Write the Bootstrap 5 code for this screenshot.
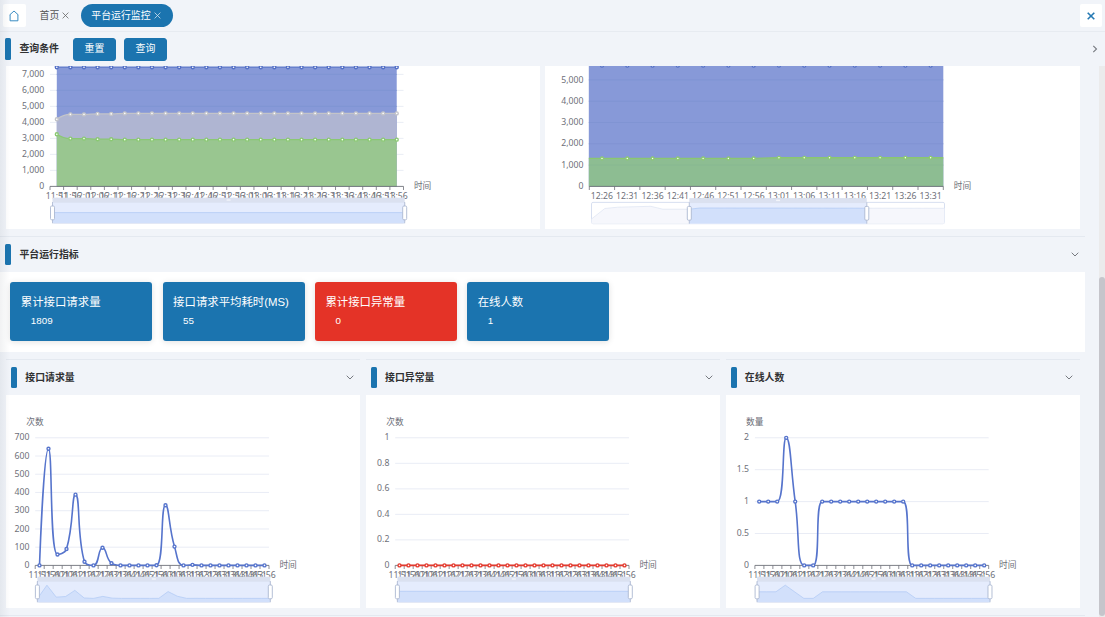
<!DOCTYPE html>
<html lang="zh-CN">
<head>
<meta charset="utf-8">
<meta name="viewport" content="width=device-width, initial-scale=1">
<title>平台运行监控</title>
<link href="https://cdn.jsdelivr.net/npm/bootstrap@5.3.0/dist/css/bootstrap.min.css" rel="stylesheet">
<style>
  body { font: 9.9px/1.4 "Liberation Sans", "Noto Sans CJK SC", sans-serif; background: #f1f4f9; color: #303133; width: 1105px; height: 617px; }
  .tab-strip { height: 32px; border-bottom: 1px solid #e7ebf1; padding: 0 3px; }
  .icon-box { width: 22.5px; height: 22.5px; background: #fff; border-radius: 2px; }
  .tab-item { color: #555; height: 22.5px; }
  .tab-item.current { background: #1b74af; color: #fff; border-radius: 12px; width: 92px; }
  .query-bar { height: 34px; padding: 0 7.5px 0 5.3px; }
  .accent { width: 6px; height: 21.5px; background: #1b74af; border-radius: 1.5px; }
  .heading { font-weight: 700; margin-left: 8.1px; }
  .btn-query { --bs-btn-font-size: 9.9px; --bs-btn-color: #fff; --bs-btn-bg: #1b74af; --bs-btn-border-color: #1b74af; --bs-btn-hover-bg: #2b84bf; --bs-btn-hover-color: #fff; --bs-btn-border-radius: 3px; width: 43px; height: 23px; padding: 0; }
  .viewport-area { height: 551px; }
  .content { width: 1085px; }
  .chart-row { padding-left: 6px; }
  .sec-head { height: 36px; border-top: 1px solid #e4e9f0; }
  .sec-main { padding: 0 6.2px 0 5.3px; }
  .sec-sub { padding: 0 6.4px 0 5.2px; }
  .metrics { height: 80px; padding: 10.3px; gap: 10.3px; margin-bottom: 7px; }
  .metric { width: 142px; height: 59px; background: #1b74af; color: #fff; border-radius: 3px; padding: 12px 10.5px; box-shadow: 0 1px 6px rgba(0,0,0,.12); }
  .metric.alarm { background: #e43327; }
  .metric-name { font-size: 11.4px; line-height: 17px; white-space: nowrap; }
  .metric-value { font-size: 9.8px; line-height: 14px; padding-left: 10px; margin-top: 3px; }
  .rail { width: 6px; background: #ebebec; }
  .rail-thumb { width: 6px; height: 339px; margin-top: 211px; border-radius: 3px; background: #c5c5cb; }
  .edge-shade { position: absolute; left: 0; top: 0; width: 10px; height: 617px; background: linear-gradient(90deg, rgba(0,21,41,.055), rgba(0,21,41,0)); pointer-events: none; }
  svg { display: block; }
  svg text { font-family: "Noto Sans", "Noto Sans CJK SC", sans-serif; font-size: 8.7px; fill: #6e7079; }
  .chev { width: 8px; height: 5px; fill: none; stroke: #777a80; stroke-width: 1; }
</style>
</head>
<body class="overflow-hidden position-relative">

<header class="tab-strip d-flex align-items-center">
  <div class="icon-box d-flex align-items-center justify-content-center">
    <svg width="10" height="12" viewBox="0 0 10 12" fill="none" stroke="#2f86bf" stroke-width=".95" stroke-linejoin="round"><path d="M.8 4.8 5 1l4.2 3.8M1.1 4.6v6.2h7.8V4.6"/></svg>
  </div>
  <div class="tab-item d-flex align-items-center ms-3 ps-0" id="tabHome"><span style="margin-left:-2px">首页</span>
    <svg style="margin-left:3px" width="7" height="7" viewBox="0 0 7 7" stroke="#666" stroke-width=".8"><path d="m.6.6 5.8 5.8M6.4.6.6 6.4"/></svg>
  </div>
  <div class="tab-item current d-flex align-items-center justify-content-center" style="margin-left:11.4px;padding-right:1.5px">平台运行监控
    <svg style="margin-left:3px" width="7" height="7" viewBox="0 0 7 7" stroke="#cfe2f0" stroke-width=".8"><path d="m.6.6 5.8 5.8M6.4.6.6 6.4"/></svg>
  </div>
  <div class="icon-box d-flex align-items-center justify-content-center ms-auto">
    <svg width="8" height="8" viewBox="0 0 8 8" stroke="#2579b3" stroke-width="1.6"><path d="m.7.7 6.6 6.6M7.3.7.7 7.3"/></svg>
  </div>
</header>

<section class="query-bar d-flex align-items-center">
  <span class="accent"></span><span class="heading">查询条件</span>
  <button class="btn btn-query" style="margin-left:14px">重置</button>
  <button class="btn btn-query" style="margin-left:8px">查询</button>
  <svg class="ms-auto" width="6" height="8" viewBox="0 0 6 8" fill="none" stroke="#777a80" stroke-width="1.1"><path d="m1.3.8 3.2 3.2-3.2 3.2"/></svg>
</section>

<main class="viewport-area d-flex justify-content-between overflow-hidden">
  <div class="content flex-shrink-0">
    <div class="chart-row d-flex" style="padding-bottom:7px;gap:5px">
      <div class="bg-white"><svg id="memory" width="534" height="163" viewBox="6 66 534 163"></svg></div>
      <div class="bg-white"><svg id="heap" width="534.5" height="163" viewBox="545.2 66 534.5 163"></svg></div>
    </div>

    <div class="sec-head sec-main d-flex align-items-center">
      <span class="accent"></span><span class="heading">平台运行指标</span>
      <svg class="chev ms-auto" viewBox="0 0 8 5"><path d="M.7.7 4 4 7.3.7"/></svg>
    </div>
    <div class="metrics d-flex bg-white">
      <div class="metric"><div class="metric-name">累计接口请求量</div><div class="metric-value">1809</div></div>
      <div class="metric"><div class="metric-name">接口请求平均耗时(MS)</div><div class="metric-value">55</div></div>
      <div class="metric alarm"><div class="metric-name">累计接口异常量</div><div class="metric-value">0</div></div>
      <div class="metric"><div class="metric-name">在线人数</div><div class="metric-value">1</div></div>
    </div>

    <div class="chart-row d-flex" style="gap:5.75px">
      <div>
        <div class="sec-head sec-sub d-flex align-items-center"><span class="accent"></span><span class="heading">接口请求量</span><svg class="chev ms-auto" viewBox="0 0 8 5"><path d="M.7.7 4 4 7.3.7"/></svg></div>
        <div class="bg-white"><svg id="requests" width="354" height="212.5" viewBox="6 395 354 212.5"></svg></div>
      </div>
      <div>
        <div class="sec-head sec-sub d-flex align-items-center"><span class="accent"></span><span class="heading">接口异常量</span><svg class="chev ms-auto" viewBox="0 0 8 5"><path d="M.7.7 4 4 7.3.7"/></svg></div>
        <div class="bg-white"><svg id="errors" width="354" height="212.5" viewBox="6 395 354 212.5"></svg></div>
      </div>
      <div>
        <div class="sec-head sec-sub d-flex align-items-center"><span class="accent"></span><span class="heading">在线人数</span><svg class="chev ms-auto" viewBox="0 0 8 5"><path d="M.7.7 4 4 7.3.7"/></svg></div>
        <div class="bg-white"><svg id="online" width="354" height="212.5" viewBox="6.3 395 354 212.5"></svg></div>
      </div>
    </div>
    <div class="sec-head" style="margin-top:7.5px"></div>
  </div>
  <div class="rail"><div class="rail-thumb"></div></div>
</main>
<div class="edge-shade"></div>

<script src="https://cdn.jsdelivr.net/npm/bootstrap@5.3.0/dist/js/bootstrap.bundle.min.js"></script>
<script>
const times = (start, n) => Array.from({length: n}, (_, i) => {
  const m = start + i * 5;
  return String(Math.floor(m / 60)).padStart(2, '0') + ':' + String(m % 60).padStart(2, '0');
});
const clamp = (v, a, b) => Math.max(Math.min(v, Math.max(a, b)), Math.min(a, b));

// Smooth curve whose control points stay within neighbouring values
function smoothPath(p) {
  let d = `M${p[0]}`, c0 = p[0];
  for (let i = 1; i < p.length; i++) {
    const [x, y] = p[i], q = p[i - 1], n = p[i + 1];
    let c1 = [x, y], next = [x, y];
    if (n) {
      const lp = Math.hypot(x - q[0], y - q[1]), ln = Math.hypot(n[0] - x, n[1] - y), r = ln / (lp + ln);
      next = [0, 1].map(k => clamp(p[i][k] + (n[k] - q[k]) * .5 * r, n[k], p[i][k]));
      c1 = [0, 1].map(k => clamp(p[i][k] - (next[k] - p[i][k]) * lp / ln, q[k], p[i][k]));
      next = [0, 1].map(k => p[i][k] + (p[i][k] - c1[k]) * ln / lp);
    }
    d += `C${c0} ${c1} ${x},${y}`;
    c0 = next;
  }
  return d;
}
const hline = (x1, x2, y, c) => `<path d="M${x1} ${y}H${x2}" stroke="${c}" stroke-width=".9"/>`;
const dots = (p, c, r = 1.5) => p.map(q => `<circle cx="${q[0]}" cy="${q[1]}" r="${r}" fill="#fff" stroke="${c}" stroke-width="1.35"/>`).join('');

function axes(o) {
  let s = hline(o.x0, o.x1, o.y0, '#6e7079');
  const step = (o.x1 - o.x0) / o.labels.length;
  for (let i = 0; i <= o.labels.length; i++) s += `<path d="M${o.x0 + i * step} ${o.y0}v3.6" stroke="#6e7079" stroke-width=".8"/>`;
  o.labels.forEach((t, i) => s += `<text x="${o.x0 + (i + .5) * step}" y="${o.y0 + 12.2}" text-anchor="middle">${t}</text>`);
  o.yl.forEach((t, i) => s += `<text x="${o.x0 - 5.8}" y="${o.y0 - i * o.dy + 2.6}" text-anchor="end">${t}</text>`);
  return s + `<text x="${o.x1 + 10.4}" y="${o.y0 + 2.7}">时间</text>`;
}
const grid = (o, c) => o.yl.map((_, i) => i ? hline(o.x0, o.x1, o.y0 - i * o.dy, c) : '').join('');

// Range slider under the x axis; shade holds the overview polyline
function slider(x0, x1, y, shade, a = x0, b = x1) {
  const h = 21.3, line = shade.map(q => q.join()).join(' ');
  const handle = x => `<path d="M${x} ${y}v${h}" stroke="#acb8d1" stroke-width=".8"/><rect x="${x - 2}" y="${y + 4}" width="4" height="13.8" rx="1.2" fill="#fff" stroke="#acb8d1" stroke-width=".9"/>`;
  const id = 'z' + Math.round(x0) + Math.round(y) + shade.length + Math.round(shade[0][1]);
  return `<clipPath id="${id}"><rect x="${a}" y="${y}" width="${b - a}" height="${h}"/></clipPath>
    <rect x="${x0}" y="${y}" width="${x1 - x0}" height="${h}" rx="1.5" fill="#fff" stroke="#d2dbee" stroke-width=".9"/>
    <polygon points="${x0},${y + h} ${line} ${x1},${y + h}" fill="#f6f7fc"/><polyline points="${line}" fill="none" stroke="#dde4f2" stroke-width=".7"/>
    <g clip-path="url(#${id})"><rect x="${a}" y="${y}" width="${b - a}" height="${h}" fill="#e5ecfd"/>
    <polygon points="${x0},${y + h} ${line} ${x1},${y + h}" fill="#d2e0fb"/><polyline points="${line}" fill="none" stroke="#b4cbf5" stroke-width=".8"/></g>
    <rect x="${a}" y="${y - 4.3}" width="${b - a}" height="5" fill="#dbe1f0"/>
    <path d="M${(a + b) / 2 - 2} ${y - 2}h4" stroke="#f3f5fa" stroke-width="1.4"/>` + handle(a) + handle(b);
}
const put = (id, s) => document.getElementById(id).innerHTML = s;
const ks = n => Array.from({length: n}, (_, i) => i ? i + ',000' : '0');

{ // stacked memory areas
  const o = {x0: 50, x1: 403.5, y0: 186.4, dy: 16, yl: ks(8), labels: times(711, 26)};
  const pts = f => o.labels.map((_, i) => [56.8 + i * 13.597, 186.4 - f(i) * .016]);
  const top = pts(() => 7450), mid = pts(i => i ? (i < 3 ? 4500 : i < 5 ? 4530 : 4560) : 4200), low = pts(i => i ? (i < 3 ? 2990 : i < 5 ? 2950 : 2920) : 3260);
  const area = (p, c) => `<path d="${smoothPath(p)}V186.4H56.8Z" fill="${c}"/>`;
  const line = (p, c) => `<path d="${smoothPath(p)}" fill="none" stroke="${c}" stroke-width="1.3"/>`;
  put('memory', grid(o, '#e6ebf4') + area(top, '#8799d8') + area(mid, '#afb5d2') + area(low, '#99c690') +
    hline(56.8, 396.7, 74.4, '#7f93d2') + hline(56.8, 396.7, 90.4, '#7f93d2') + hline(56.8, 396.7, 106.4, '#7f93d2') +
    line(top, '#5470c6') + line(mid, '#c3c4c9') + line(low, '#8ac873') +
    dots(top, '#5470c6') + dots(mid, '#c3c4c9') + dots(low, '#8ac873') + axes(o) +
    slider(52.5, 404.7, 202, [[52.5, 212.6], [404.7, 212.6]]));
}
{ // heap areas, zoomed to part of the range
  const o = {x0: 589.5, x1: 943.5, y0: 186.4, dy: 21.3, yl: ks(6), labels: times(746, 14)};
  const low = o.labels.map((_, i) => [602.2 + i * 25.28, i < 7 ? 158.4 : 157.7]);
  put('heap', `<rect x="589" y="66" width="354.5" height="120.4" fill="#8799d8"/>` +
    `<path d="M589 158.4H754L779 157.7H943.5V186.4H589Z" fill="#8dbd92"/>` + [1,2,3,4,5].map(i => hline(589, 943.5, 186.4 - i * 21.3, i > 1 ? '#7f93d2' : '#87b892')).join('') +
    `<path d="M589 158.4H754L779 157.7H943.5" fill="none" stroke="#8ac770" stroke-width="1.4"/>` + dots(low, '#8cc970', 1.4) + dots(low.map(q => [q[0], 65.6]), '#5470c6') + axes(o) +
    slider(591.7, 944.7, 202.4, [[591.7, 219], [605, 208.5], [618, 207.2], [651, 206.3], [663, 209.2], [690, 209.2], [700, 208], [944.7, 208.3]], 689.5, 867));
}
function small(id, yl, dy, max, name, data, color, flat) {
  const o = {x0: 35.2, x1: 269, y0: 565.4, dy, yl, labels: times(711, 26)};
  const p = data.map((v, i) => [39.5 + i * 9, 565.4 - v / max * 127.6]);
  const peak = Math.max(...data), sh = data.map((v, i) => [37.6 + i * 9.32, flat ? 591.3 : 598.4 - v / peak * 13.2]);
  put(id, grid(o, '#e6eaf4') + axes(o) + `<text x="35" y="425.3" text-anchor="middle">${name}</text>` +
    `<path d="${smoothPath(p)}" fill="none" stroke="${color}" stroke-width="1.6"/>` + dots(p, color) + slider(37.4, 270.3, 581, sh));
}
const zeros = n => Array(n).fill(0);
small('requests', [0,100,200,300,400,500,600,700], 18.23, 700, '次数', [0,640,60,90,388,20,0,97,12,...zeros(4),1,330,103,0,3,...zeros(8)], '#5674cc');
small('errors', ['0','0.2','0.4','0.6','0.8','1'], 25.52, 1, '次数', zeros(26), '#e43a2e', true);
small('online', ['0','0.5','1','1.5','2'], 31.9, 2, '数量', [1,1,1,2,1,0,0,...Array(10).fill(1),...zeros(9)], '#5674cc');
</script>
</body>
</html>
